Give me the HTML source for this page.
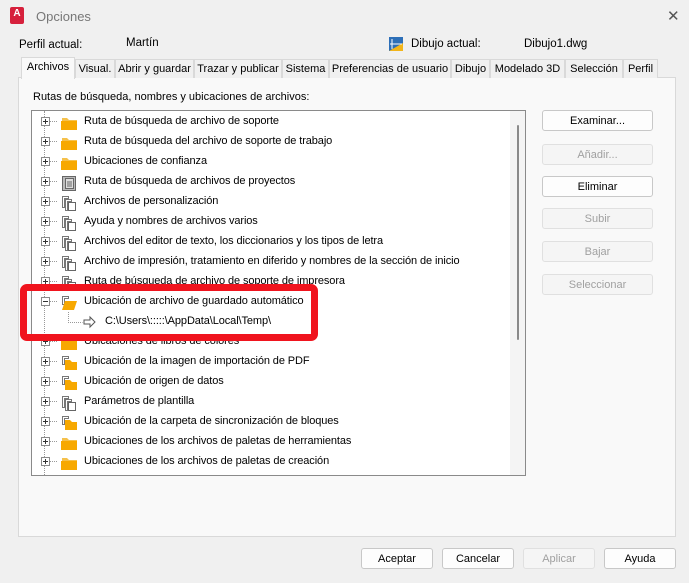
<!DOCTYPE html>
<html><head><meta charset="utf-8"><style>
*{margin:0;padding:0;box-sizing:border-box}
body{width:689px;height:583px;background:#f0f0f0;font-family:"Liberation Sans",sans-serif;font-size:11px;color:#000;position:relative;overflow:hidden}
.a{position:absolute;white-space:nowrap}
.tab{position:absolute;top:59px;height:19px;border:1px solid #d9d9d9;border-bottom:none;background:#f0f0f0;text-align:center;line-height:18px;font-size:11px}
.btn{position:absolute;width:111px;height:21px;border:1px solid #c8c8c8;border-radius:3px;background:#fdfdfd;text-align:center;line-height:21px;font-size:11px}
.dis{color:#a0a0a0;background:#f5f5f5;border-color:#e0e0e0}
.row{position:absolute;left:0;height:20px;width:480px}
.row .t{position:absolute;left:52px;top:3px;font-size:11px;letter-spacing:-0.1px}
.row svg{position:absolute;left:0;top:0}
</style></head><body>
<svg width="0" height="0" style="position:absolute">
<defs>
<g id="ex"><rect x="9.5" y="5.5" width="8" height="8" fill="#fff" stroke="#8a8a8a"/><path d="M11 9.5h5M13.5 7v5" stroke="#333"/><path d="M18 9.5h8" stroke="#999" stroke-dasharray="1 1"/></g>
<g id="F"><path d="M30 6h5l2 2h8v10H30z" fill="#f5c14d"/><path d="M29 9h16v9H29z" fill="#f7a800"/></g>
<g id="D"><path d="M30.5 4.5h6v2h-4v9h-2z M33.5 7.5h6v2h-4v9h-2z" fill="none" stroke="#777"/><rect x="36.5" y="10.5" width="7" height="8" fill="#fff" stroke="#666"/></g>
<g id="DF"><path d="M30.5 4.5h6v2h-4v6h-2z" fill="none" stroke="#777"/><path d="M33 8h5l2 2h5v8H33z" fill="#f7a800"/></g>
<g id="P"><rect x="30.5" y="4.5" width="13" height="14" fill="#bbb" stroke="#666"/><rect x="33.5" y="6.5" width="8" height="10" fill="#ddd" stroke="#666"/><path d="M35 10h5M35 12h5M35 14h5" stroke="#666"/></g>
</defs></svg>

<div class="a" style="left:10px;top:7px;width:14px;height:17px;background:#d6203c;border-radius:2px;color:#fff;font-size:10px;font-weight:bold;text-align:center;line-height:13px">A</div>
<div class="a" style="left:36px;top:9px;font-size:13px;color:#777">Opciones</div>
<div class="a" style="left:667px;top:7px;font-size:15px;color:#555">✕</div>

<div class="a" style="left:19px;top:39px;font-size:11.5px">Perfil actual:</div>
<div class="a" style="left:126px;top:37px;font-size:11.5px">Martín</div>
<svg class="a" style="left:389px;top:37px" width="14" height="14"><rect width="14" height="14" fill="#2d6fb8"/><path d="M0 14L14 6v8z" fill="#f2b51a"/><path d="M3 2v10M1 7h12" stroke="#fff"/></svg>
<div class="a" style="left:411px;top:38px;font-size:11.5px">Dibujo actual:</div>
<div class="a" style="left:524px;top:38px;font-size:11.5px">Dibujo1.dwg</div>

<div class="a" style="left:18px;top:77px;width:658px;height:460px;background:#f9f9f9;border:1px solid #d9d9d9"></div>
<div class="tab" style="left:75px;width:40px">Visual.</div>
<div class="tab" style="left:115px;width:79px">Abrir y guardar</div>
<div class="tab" style="left:194px;width:88px">Trazar y publicar</div>
<div class="tab" style="left:282px;width:47px">Sistema</div>
<div class="tab" style="left:329px;width:122px">Preferencias de usuario</div>
<div class="tab" style="left:451px;width:39px">Dibujo</div>
<div class="tab" style="left:490px;width:75px">Modelado 3D</div>
<div class="tab" style="left:565px;width:58px">Selección</div>
<div class="tab" style="left:623px;width:35px">Perfil</div>
<div class="tab" style="left:21px;top:57px;height:22px;width:54px;background:#f9f9f9;line-height:19px">Archivos</div>

<div class="a" style="left:33px;top:91px">Rutas de búsqueda, nombres y ubicaciones de archivos:</div>

<div class="a" style="left:31px;top:110px;width:495px;height:366px;background:#fff;border:1px solid #8a8a8a;overflow:hidden">
<div class="a" style="left:12px;top:0;height:366px;border-left:1px dotted #999"></div>
<div class="a" style="left:478px;top:0;width:16px;height:364px;background:#f4f4f4"></div>
<div class="a" style="left:485px;top:14px;width:2px;height:215px;background:#8a8a8a;border-radius:1px"></div>
<div style="position:absolute;left:0;top:0">
<div class="row" style="top:1px"><svg width="50" height="20"><use href="#ex"/><use href="#F"/></svg><span class="t">Ruta de búsqueda de archivo de soporte</span></div>
<div class="row" style="top:21px"><svg width="50" height="20"><use href="#ex"/><use href="#F"/></svg><span class="t">Ruta de búsqueda del archivo de soporte de trabajo</span></div>
<div class="row" style="top:41px"><svg width="50" height="20"><use href="#ex"/><use href="#F"/></svg><span class="t">Ubicaciones de confianza</span></div>
<div class="row" style="top:61px"><svg width="50" height="20"><use href="#ex"/><use href="#P"/></svg><span class="t">Ruta de búsqueda de archivos de proyectos</span></div>
<div class="row" style="top:81px"><svg width="50" height="20"><use href="#ex"/><use href="#D"/></svg><span class="t">Archivos de personalización</span></div>
<div class="row" style="top:101px"><svg width="50" height="20"><use href="#ex"/><use href="#D"/></svg><span class="t">Ayuda y nombres de archivos varios</span></div>
<div class="row" style="top:121px"><svg width="50" height="20"><use href="#ex"/><use href="#D"/></svg><span class="t">Archivos del editor de texto, los diccionarios y los tipos de letra</span></div>
<div class="row" style="top:141px"><svg width="50" height="20"><use href="#ex"/><use href="#D"/></svg><span class="t">Archivo de impresión, tratamiento en diferido y nombres de la sección de inicio</span></div>
<div class="row" style="top:161px"><svg width="50" height="20"><use href="#ex"/><use href="#D"/></svg><span class="t">Ruta de búsqueda de archivo de soporte de impresora</span></div>
<div class="row" style="top:181px"><svg width="50" height="20"><rect x="9.5" y="5.5" width="8" height="8" fill="#fff" stroke="#8a8a8a"/><path d="M11 9.5h5" stroke="#333"/><path d="M18 9.5h8" stroke="#999" stroke-dasharray="1 1"/><path d="M30.5 4.5h6v2h-4v6h-2z" fill="none" stroke="#777"/><path d="M33 9h12l-3 9H30z" fill="#f7a800"/></svg><span class="t">Ubicación de archivo de guardado automático</span></div>
<div class="row" style="top:201px"><svg width="75" height="20"><path d="M36.5 0v10.5h14" fill="none" stroke="#999" stroke-dasharray="1 1"/><path d="M52 8h6v-3l5 5-5 5v-3h-6z" fill="#fff" stroke="#555"/></svg><span class="t" style="left:73px">C:\Users\:::::\AppData\Local\Temp\</span></div>
<div class="row" style="top:221px"><svg width="50" height="20"><use href="#ex"/><use href="#F"/></svg><span class="t">Ubicaciones de libros de colores</span></div>
<div class="row" style="top:241px"><svg width="50" height="20"><use href="#ex"/><use href="#DF"/></svg><span class="t">Ubicación de la imagen de importación de PDF</span></div>
<div class="row" style="top:261px"><svg width="50" height="20"><use href="#ex"/><use href="#DF"/></svg><span class="t">Ubicación de origen de datos</span></div>
<div class="row" style="top:281px"><svg width="50" height="20"><use href="#ex"/><use href="#D"/></svg><span class="t">Parámetros de plantilla</span></div>
<div class="row" style="top:301px"><svg width="50" height="20"><use href="#ex"/><use href="#DF"/></svg><span class="t">Ubicación de la carpeta de sincronización de bloques</span></div>
<div class="row" style="top:321px"><svg width="50" height="20"><use href="#ex"/><use href="#F"/></svg><span class="t">Ubicaciones de los archivos de paletas de herramientas</span></div>
<div class="row" style="top:341px"><svg width="50" height="20"><use href="#ex"/><use href="#F"/></svg><span class="t">Ubicaciones de los archivos de paletas de creación</span></div>
</div>
</div>

<div class="a" style="left:20px;top:284px;width:298px;height:57px;border:7px solid #f0141e;border-radius:7px"></div>

<div class="btn" style="left:542px;top:110px">Examinar...</div>
<div class="btn dis" style="left:542px;top:144px">Añadir...</div>
<div class="btn" style="left:542px;top:176px">Eliminar</div>
<div class="btn dis" style="left:542px;top:208px">Subir</div>
<div class="btn dis" style="left:542px;top:241px">Bajar</div>
<div class="btn dis" style="left:542px;top:274px">Seleccionar</div>

<div class="btn" style="left:361px;top:548px;width:72px">Aceptar</div>
<div class="btn" style="left:442px;top:548px;width:72px">Cancelar</div>
<div class="btn dis" style="left:523px;top:548px;width:72px">Aplicar</div>
<div class="btn" style="left:604px;top:548px;width:72px">Ayuda</div>
</body></html>
